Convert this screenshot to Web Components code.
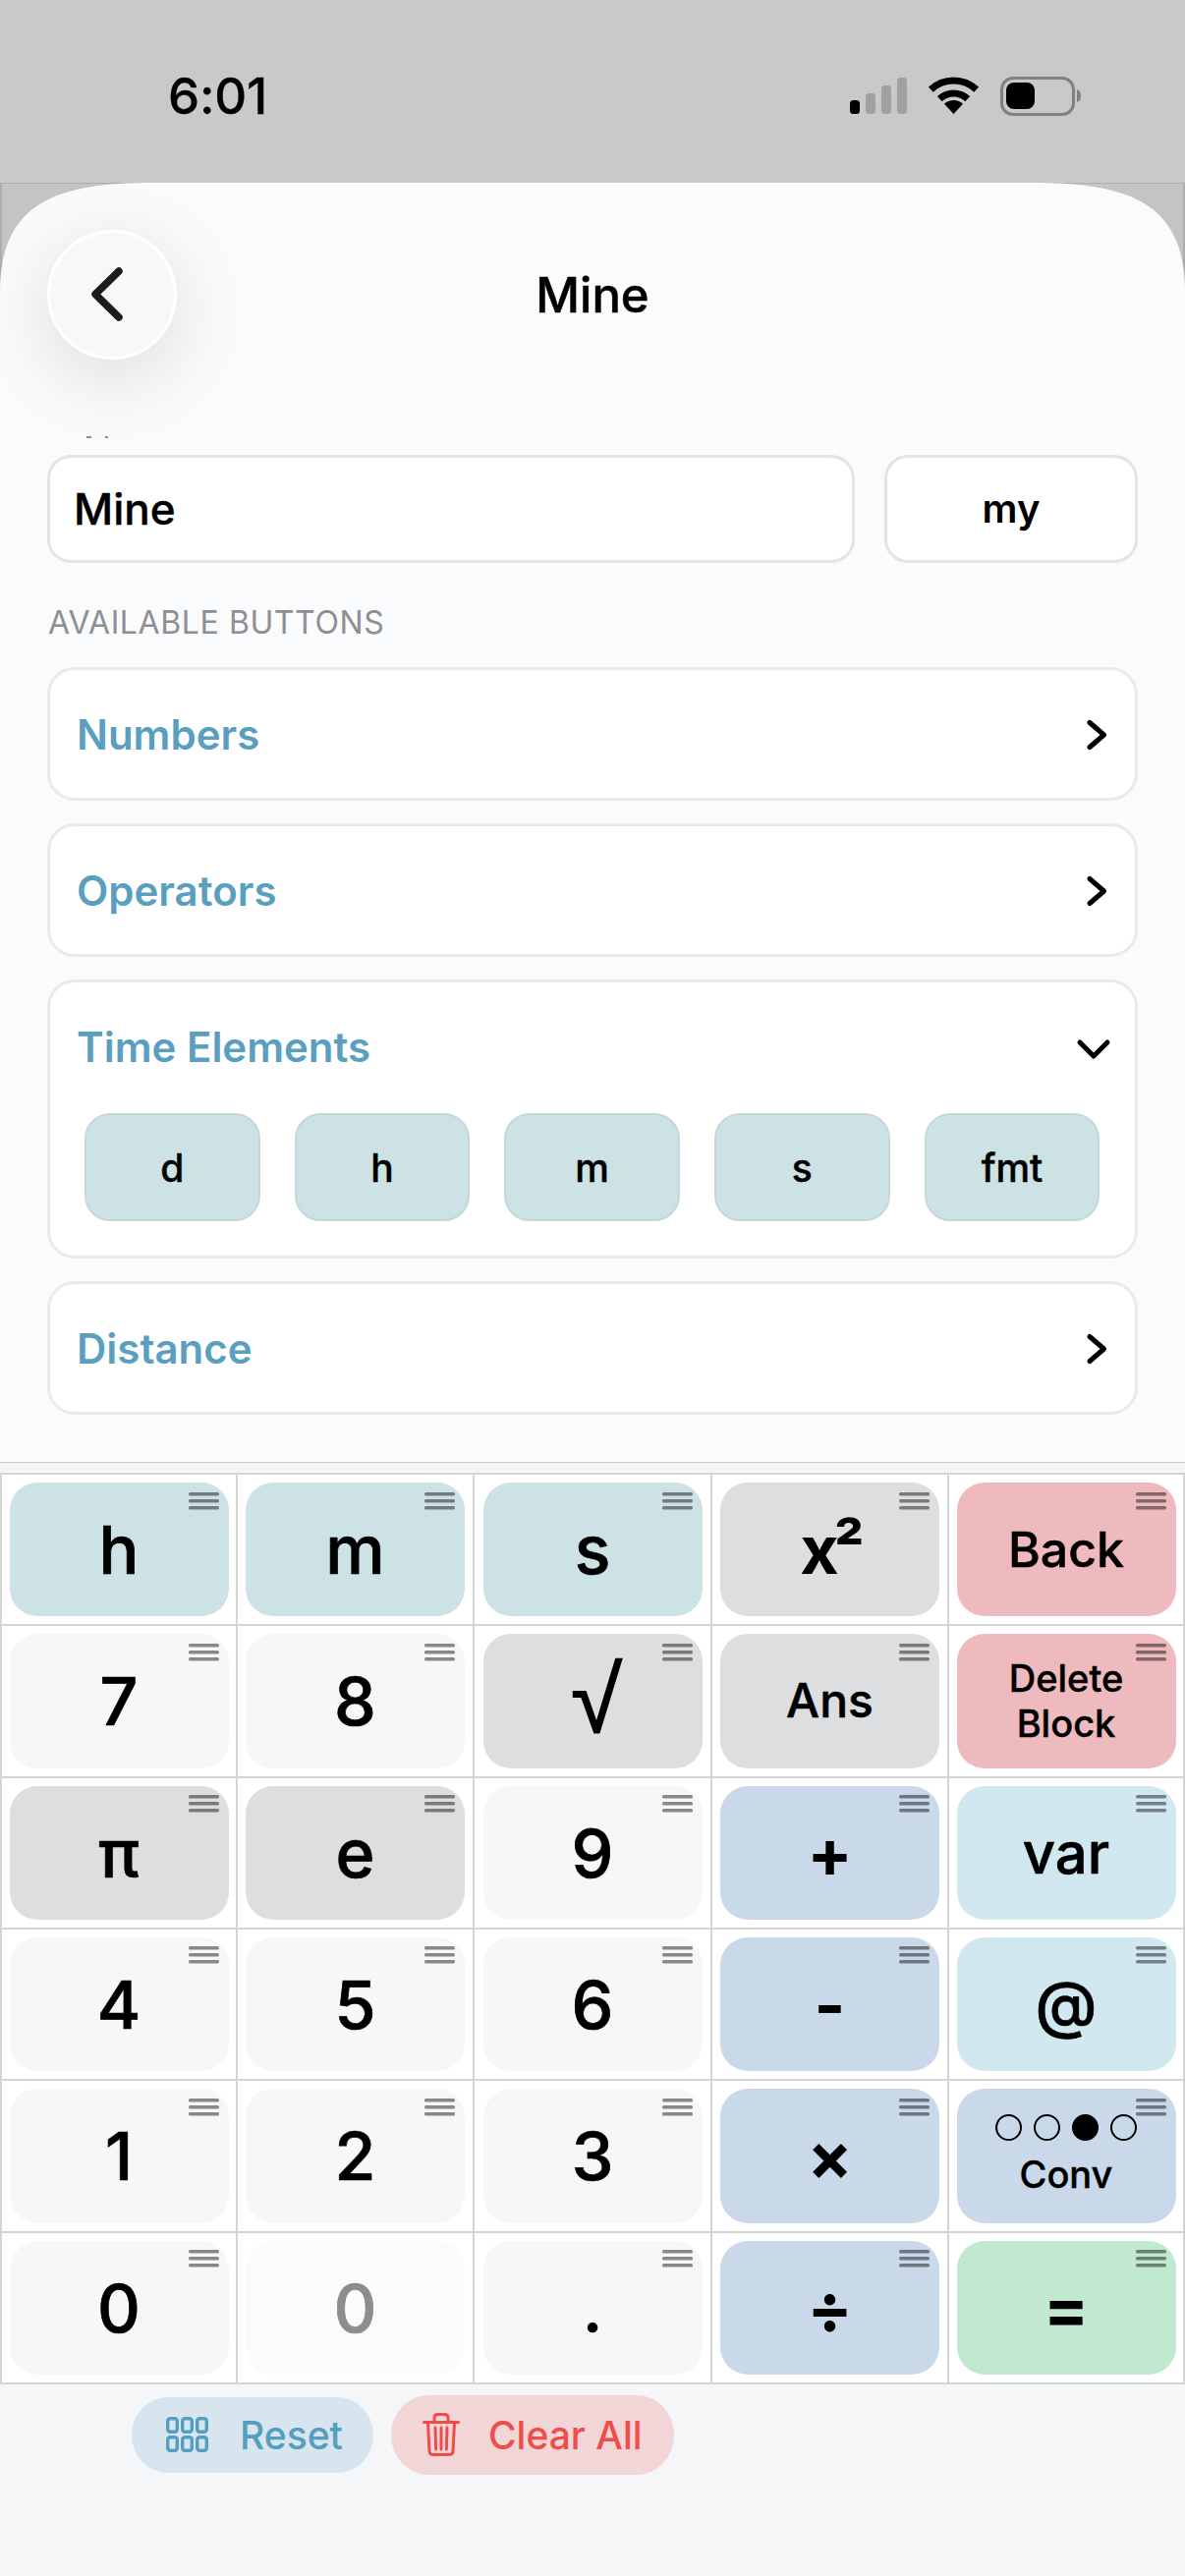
<!DOCTYPE html>
<html lang="en">
<head>
<meta charset="utf-8">
<title>Mine</title>
<style>
  html, body { margin: 0; padding: 0; background: #f5f6f8; }
  body { font-family: Inter, "Noto Sans", sans-serif; color: #000; }
</style>
</head>
<body>
<app-screen>
  <status-bar slot="status" time="6:01"></status-bar>
  <top-nav slot="nav" title="Mine"></top-nav>
  <name-fields slot="fields" name="Mine" short="my"></name-fields>
  <section-card slot="sections" title="Numbers"></section-card>
  <section-card slot="sections" title="Operators"></section-card>
  <section-card slot="sections" title="Time Elements" open>
    <key-chip>d</key-chip>
    <key-chip>h</key-chip>
    <key-chip>m</key-chip>
    <key-chip>s</key-chip>
    <key-chip>fmt</key-chip>
  </section-card>
  <section-card slot="sections" title="Distance"></section-card>
  <calc-grid slot="grid">
    <calc-key tone="teal">h</calc-key>
    <calc-key tone="teal">m</calc-key>
    <calc-key tone="teal">s</calc-key>
    <calc-key tone="gray" weight="700"><span style="letter-spacing:-5px">x²</span></calc-key>
    <calc-key tone="red" size="50">Back</calc-key>
    <calc-key>7</calc-key>
    <calc-key>8</calc-key>
    <calc-key tone="gray"><span style="font-family:'Liberation Sans',sans-serif;font-size:94px;padding-left:8px;-webkit-text-stroke:1.6px #000">√</span></calc-key>
    <calc-key tone="gray" size="48">Ans</calc-key>
    <calc-key tone="red" size="38">Delete<br>Block</calc-key>
    <calc-key tone="gray">π</calc-key>
    <calc-key tone="gray">e</calc-key>
    <calc-key>9</calc-key>
    <calc-key tone="blue" weight="700">+</calc-key>
    <calc-key tone="cyan" size="58">var</calc-key>
    <calc-key>4</calc-key>
    <calc-key>5</calc-key>
    <calc-key>6</calc-key>
    <calc-key tone="blue" weight="700">-</calc-key>
    <calc-key tone="cyan" size="64">@</calc-key>
    <calc-key>1</calc-key>
    <calc-key>2</calc-key>
    <calc-key>3</calc-key>
    <calc-key tone="blue" weight="700">×</calc-key>
    <calc-key tone="blue" size="38"><conv-dots active="2"></conv-dots>Conv</calc-key>
    <calc-key>0</calc-key>
    <calc-key tone="off">0</calc-key>
    <calc-key>.</calc-key>
    <calc-key tone="blue" weight="700">÷</calc-key>
    <calc-key tone="green" weight="700">=</calc-key>
  </calc-grid>
  <action-pill slot="actions" kind="reset">Reset</action-pill>
  <action-pill slot="actions" kind="clear">Clear All</action-pill>
</app-screen>

<script>
class AppScreen extends HTMLElement {
  connectedCallback() {
    this.attachShadow({ mode: 'open' });
    this.shadowRoot.innerHTML = `
      <style>
        :host { display: flex; flex-direction: column; width: 1206px; height: 2622px; overflow: hidden; background: #f5f6f8; }
        .behind { position: relative; background: #c3c4c6; box-shadow: inset 2px 1px 0 #adaeb0, inset -2px 0 0 #adaeb0; }
        .peek { position: absolute; left: 25px; top: 30px; }
        .sheet { position: relative; height: 1302px; box-sizing: border-box; padding: 0 48px; background: #fafbfd;
                 clip-path: path("M0 110 C1 25 50 0 154 0 H1052 C1156 0 1205 25 1206 110 V1302 H0 Z"); }
        .list { display: flex; flex-direction: column; gap: 23px; }
        .rule { height: 2px; margin-top: -1px; background: #c9c9cd; }
        .grid-wrap { padding-top: 10px; }
        .actions { display: flex; align-items: center; gap: 18px; padding: 11px 0 0 134px; }
      </style>
      <slot name="status"></slot>
      <div class="behind">
        <svg class="peek" width="12" height="14" viewBox="0 0 12 14"><path d="M0 12 V8 L8 0 H12 Z" fill="#111"/></svg>
        <div class="sheet">
          <slot name="nav"></slot>
          <slot name="fields"></slot>
          <div class="list"><slot name="sections"></slot></div>
        </div>
      </div>
      <div class="rule"></div>
      <div class="grid-wrap"><slot name="grid"></slot></div>
      <div class="actions"><slot name="actions"></slot></div>
    `;
  }
}

class StatusBar extends HTMLElement {
  connectedCallback() {
    this.attachShadow({ mode: 'open' });
    this.shadowRoot.innerHTML = `
      <style>
        :host { display: flex; align-items: flex-start; justify-content: space-between; box-sizing: border-box;
                height: 186px; padding: 67px 106px 0 171px; background: #c8cac9; }
        .time { font: 500 51px/62px Inter, sans-serif; color: #000; letter-spacing: -.2px; -webkit-text-stroke: .3px #000; }
        svg { display: block; margin-top: 11px; }
      </style>
      <div class="time">${this.getAttribute('time')}</div>
      <svg width="235" height="40" viewBox="0 0 235 40">
        <rect x="0" y="24" width="10" height="14" rx="3.5" fill="#000"/>
        <rect x="16" y="17" width="10" height="21" rx="3.5" fill="#a0a1a1"/>
        <rect x="32" y="9" width="10" height="29" rx="3.5" fill="#a0a1a1"/>
        <rect x="48" y="1" width="10" height="37" rx="3.5" fill="#a0a1a1"/>
        <g fill="none" stroke="#000" stroke-width="7">
          <path d="M82.3 13.1 A34 34 0 0 1 128.7 13.1"/>
          <path d="M91.2 22.6 A21 21 0 0 1 119.8 22.6"/>
        </g>
        <path d="M105.5 38 L96 27.8 A14 14 0 0 1 115 27.8 Z" fill="#000"/>
        <rect x="154.5" y="1.5" width="73" height="37" rx="11.5" fill="none" stroke="#7f8080" stroke-width="3"/>
        <rect x="159" y="6" width="29" height="27" rx="8" fill="#000"/>
        <path d="M231 13 C234 14 235 16 235 19.5 C235 23 234 25 231 26 Z" fill="#7f8080"/>
      </svg>
    `;
  }
}

class TopNav extends HTMLElement {
  connectedCallback() {
    this.attachShadow({ mode: 'open' });
    this.shadowRoot.innerHTML = `
      <style>
        :host { display: grid; grid-template-columns: 132px 1fr 132px; align-items: center; height: 277px;
                box-sizing: border-box; padding-bottom: 97px; padding-top: 48px; position: relative; }
        .back { width: 132px; height: 132px; box-sizing: border-box; border-radius: 50%; background: #f8f8f9;
                border: 3px solid #fff; box-shadow: 0 18px 80px rgba(0,0,0,.13); display: flex; align-items: center; justify-content: center; }
        h1 { margin: 0; padding-top: 2px; text-align: center; font: 500 49px/60px Inter, sans-serif; color: #000; -webkit-text-stroke: .5px #000; }
        .crumb { position: absolute; left: 40px; top: 258px; }
      </style>
      <div class="back">
        <svg width="132" height="132" viewBox="0 0 132 132" style="flex:none">
          <polyline points="73,42 49,65.5 73,89" fill="none" stroke="#1c1c1e" stroke-width="7.5" stroke-linecap="round" stroke-linejoin="round"/>
        </svg>
      </div>
      <h1>${this.getAttribute('title')}</h1>
      <div></div>
      <svg class="crumb" width="26" height="3" viewBox="0 0 26 3"><rect x="0" y="0" width="5" height="2" fill="#8e8f91"/><rect x="19" y="0" width="3" height="2" fill="#8e8f91"/></svg>
    `;
  }
}

class NameFields extends HTMLElement {
  connectedCallback() {
    this.attachShadow({ mode: 'open' });
    this.shadowRoot.innerHTML = `
      <style>
        :host { display: block; }
        .row { display: flex; gap: 30px; }
        .field { height: 110px; box-sizing: border-box; background: #fff; border: 3px solid #e3e4e6; border-radius: 24px;
                 display: flex; align-items: center; color: #000; }
        .name { flex: 1; padding-left: 24px; font: 500 44px/1 Inter, sans-serif; -webkit-text-stroke: .4px #000; }
        .short { width: 258px; justify-content: center; font: 600 40px/1 Inter, sans-serif; }
        .label { margin: 42px 0 26px; padding-left: 1px; font: 400 32px/38px Inter, sans-serif; color: #8d8f92; letter-spacing: .6px; }
      </style>
      <div class="row">
        <div class="field name">${this.getAttribute('name')}</div>
        <div class="field short">${this.getAttribute('short')}</div>
      </div>
      <div class="label">AVAILABLE BUTTONS</div>
    `;
  }
}

class SectionCard extends HTMLElement {
  connectedCallback() {
    const open = this.hasAttribute('open');
    this.attachShadow({ mode: 'open' });
    this.shadowRoot.innerHTML = `
      <style>
        :host { display: block; box-sizing: border-box; background: #fff; border: 3px solid #e9eaec; border-radius: 28px; }
        .head { display: flex; align-items: center; justify-content: space-between; height: 130px; padding: 2px 27px 0 27px; box-sizing: border-box; }
        .title { font: 600 42px/1 Inter, sans-serif; color: #5a9fc0; }
        .body { display: flex; gap: 35.2px; padding: 3px 36px 35px 35px; }
        svg { display: block; overflow: visible; }
      </style>
      <div class="head">
        <div class="title">${this.getAttribute('title')}</div>
        ${open
          ? `<svg width="36" height="24" viewBox="0 0 36 24"><polyline points="7,7 21,21 35,7" fill="none" stroke="#000" stroke-width="5" stroke-linecap="round" stroke-linejoin="round"/></svg>`
          : `<svg width="24" height="36" viewBox="0 0 24 36"><polyline points="5,5.5 19.5,18 5,30.5" fill="none" stroke="#000" stroke-width="5" stroke-linecap="round" stroke-linejoin="round"/></svg>`}
      </div>
      ${open ? `<div class="body"><slot></slot></div>` : ''}
    `;
  }
}

class KeyChip extends HTMLElement {
  connectedCallback() {
    this.attachShadow({ mode: 'open' });
    this.shadowRoot.innerHTML = `
      <style>
        :host { display: flex; align-items: center; justify-content: center; box-sizing: border-box; flex: 0 0 178.5px; height: 110px;
                background: #cde2e5; border: 2px solid #c5d8dc; border-radius: 26px; font: 500 39px/1 Inter, sans-serif; color: #000;
                -webkit-text-stroke: .4px #000; }
      </style>
      <slot></slot>
    `;
  }
}

class CalcGrid extends HTMLElement {
  connectedCallback() {
    this.attachShadow({ mode: 'open' });
    this.shadowRoot.innerHTML = `
      <style>
        :host { display: grid; grid-template-columns: 238px 239px 240px 239px 238px; grid-auto-rows: 152.33px; gap: 2px; padding: 2px;
                background: #d4d4d6; }
      </style>
      <slot></slot>
    `;
  }
}

const KEY_TONES = {
  plain: '#f6f7f9', teal: '#cde2e5', gray: '#dddee0', red: '#eebabd',
  blue: '#c9d9e9', cyan: '#d1e8f0', green: '#c1e9d0', off: '#fbfbfc'
};

class CalcKey extends HTMLElement {
  connectedCallback() {
    const tone = this.getAttribute('tone') || 'plain';
    const size = this.getAttribute('size') || 68;
    const weight = this.getAttribute('weight') || 500;
    const ink = tone === 'off' ? '#8c8e8d' : '#000';
    // Inter here has no in-between weights, so 500 gets a thin stroke to sit near the reference
    const stroke = weight == 500 ? size * 0.011 : 0;
    this.attachShadow({ mode: 'open' });
    this.shadowRoot.innerHTML = `
      <style>
        :host { display: flex; align-items: center; justify-content: center; background: #fff; }
        .key { position: relative; width: 223px; height: 136.33px; border-radius: 28px; background: ${KEY_TONES[tone]};
               display: flex; flex-direction: column; align-items: center; justify-content: center; text-align: center;
               font: ${weight} ${size}px/${size < 40 ? '46px' : '1'} Inter, "Noto Sans", sans-serif;
               color: ${ink}; -webkit-text-stroke: ${stroke}px ${ink}; }
        .grip { position: absolute; top: 9.5px; right: 10px; width: 31px; height: 18px; }
      </style>
      <div class="key">
        <slot></slot>
        ${tone === 'off' ? '' : `<svg class="grip" viewBox="0 0 31 18"><g fill="#000" fill-opacity=".45"><rect y="0" width="31" height="3.6" rx="1.5"/><rect y="7" width="31" height="3.6" rx="1.5"/><rect y="14" width="31" height="3.6" rx="1.5"/></g></svg>`}
      </div>
    `;
  }
}

class ConvDots extends HTMLElement {
  connectedCallback() {
    const active = +this.getAttribute('active');
    const dots = [0, 1, 2, 3].map(i => `<i class="${i === active ? 'on' : ''}"></i>`).join('');
    this.attachShadow({ mode: 'open' });
    this.shadowRoot.innerHTML = `
      <style>
        :host { display: flex; gap: 12px; margin-bottom: 11px; }
        i { display: block; width: 27px; height: 27px; box-sizing: border-box; border: 2.5px solid #000; border-radius: 50%; }
        i.on { background: #000; }
      </style>
      ${dots}
    `;
  }
}

class ActionPill extends HTMLElement {
  connectedCallback() {
    const reset = this.getAttribute('kind') === 'reset';
    const icon = reset
      ? `<svg width="43" height="36" viewBox="0 0 43 36" fill="none" stroke="#549ebf" stroke-width="3.4">
           <rect x="1.7" y="1.7" width="9.6" height="13.6" rx="2.5"/><rect x="16.7" y="1.7" width="9.6" height="13.6" rx="2.5"/><rect x="31.7" y="1.7" width="9.6" height="13.6" rx="2.5"/>
           <rect x="1.7" y="20.7" width="9.6" height="13.6" rx="2.5"/><rect x="16.7" y="20.7" width="9.6" height="13.6" rx="2.5"/><rect x="31.7" y="20.7" width="9.6" height="13.6" rx="2.5"/>
         </svg>`
      : `<svg width="38" height="44" viewBox="0 0 38 44" fill="none" stroke="#ef4d4a" stroke-width="3" stroke-linecap="round" stroke-linejoin="round">
           <path d="M1.5 9.5 H36.5"/>
           <path d="M12 9 V5 Q12 1.5 15.5 1.5 H22.5 Q26 1.5 26 5 V9"/>
           <path d="M5.5 10 L7 39 Q7.2 42.5 10.5 42.5 H27.5 Q30.8 42.5 31 39 L32.5 10"/>
           <path d="M13 15 L13.6 37 M19 15 V37 M25 15 L24.4 37"/>
         </svg>`;
    this.attachShadow({ mode: 'open' });
    this.shadowRoot.innerHTML = `
      <style>
        :host { display: flex; align-items: center; box-sizing: border-box; border-radius: 38px / 40px;
                height: ${reset ? 77 : 81}px; width: ${reset ? 246 : 288}px;
                padding-left: ${reset ? 35 : 32}px; gap: ${reset ? 32 : 29}px;
                background: ${reset ? '#d7e5ee' : '#f2d6d7'}; color: ${reset ? '#549ebf' : '#ef4d4a'};
                font: 500 39px/1 Inter, sans-serif; white-space: nowrap; }
        svg { flex: none; display: block; }
      </style>
      ${icon}<slot></slot>
    `;
  }
}

customElements.define('app-screen', AppScreen);
customElements.define('status-bar', StatusBar);
customElements.define('top-nav', TopNav);
customElements.define('name-fields', NameFields);
customElements.define('section-card', SectionCard);
customElements.define('key-chip', KeyChip);
customElements.define('calc-grid', CalcGrid);
customElements.define('calc-key', CalcKey);
customElements.define('conv-dots', ConvDots);
customElements.define('action-pill', ActionPill);
</script>
</body>
</html>
